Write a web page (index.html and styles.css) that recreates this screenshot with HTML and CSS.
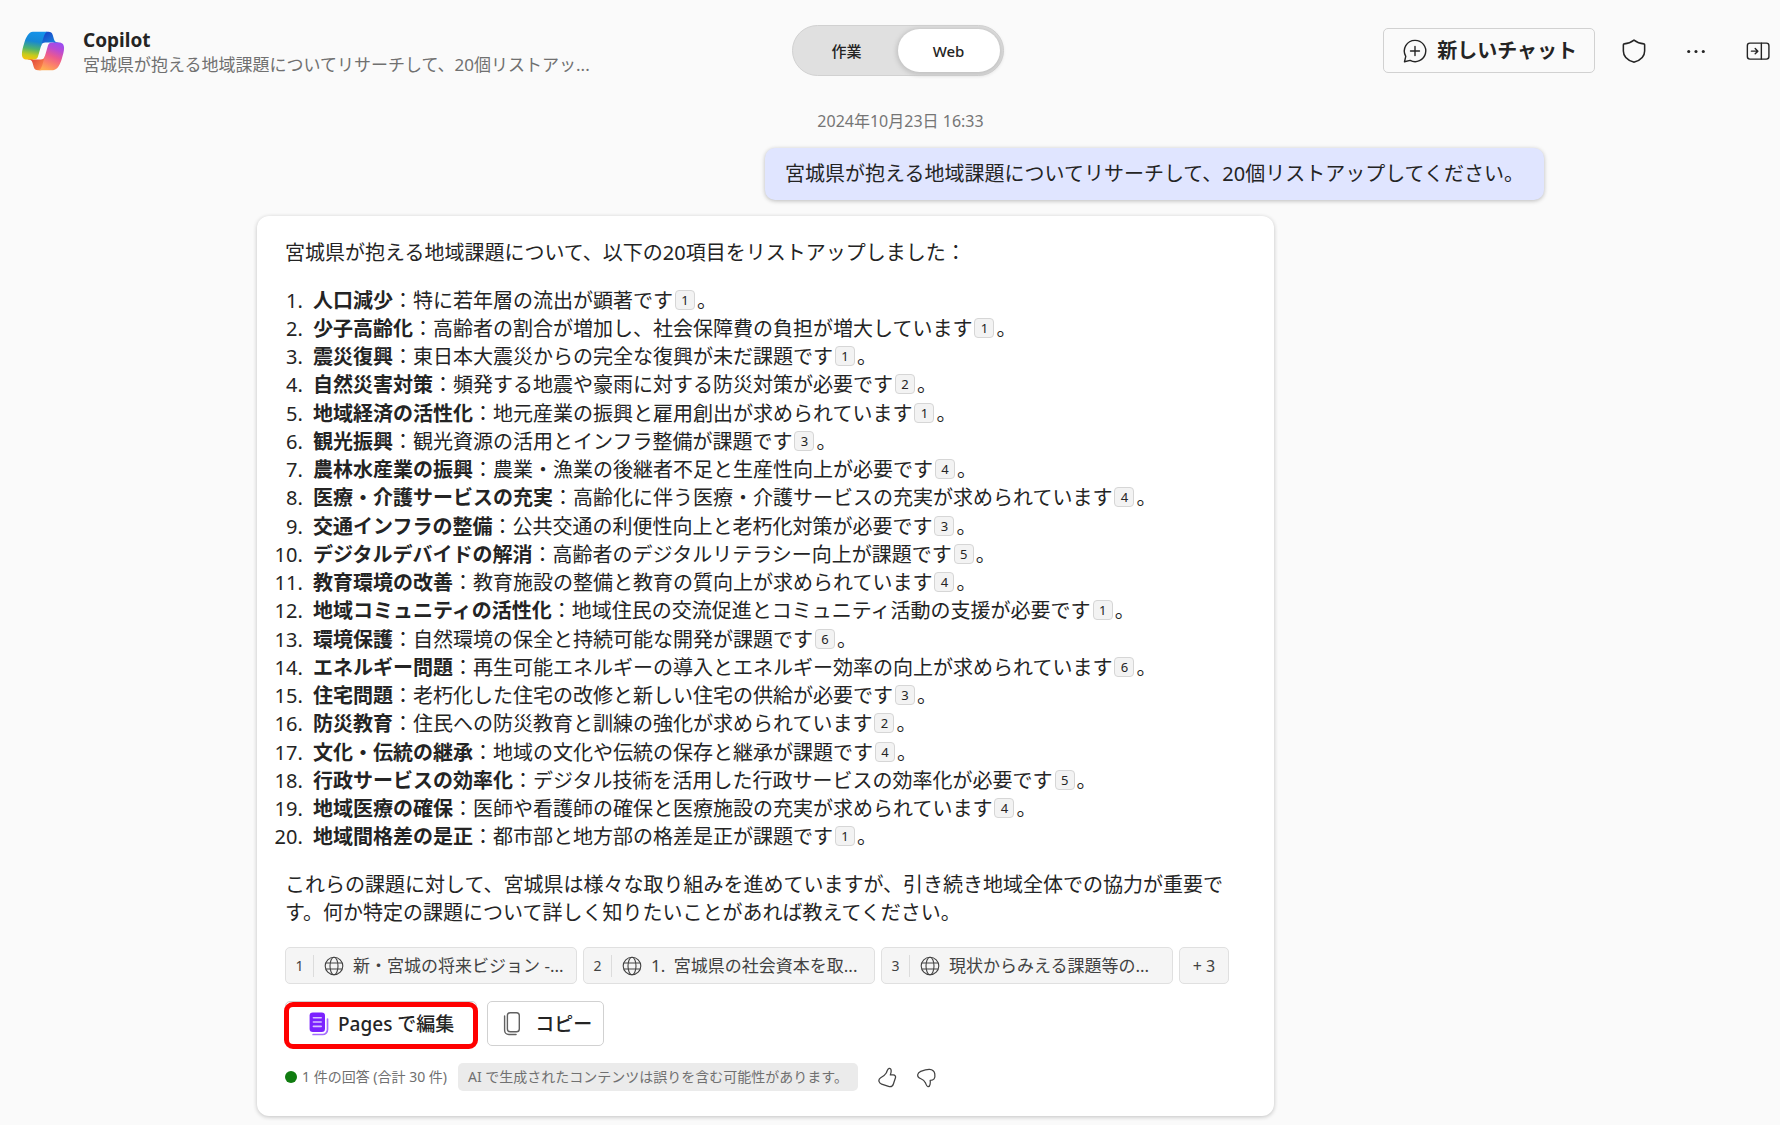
FILE: index.html
```html
<!DOCTYPE html>
<html lang="ja">
<head>
<meta charset="utf-8">
<meta name="viewport" content="width=device-width, initial-scale=1">
<title>Copilot</title>
<link rel="stylesheet" href="styles.css">
</head>
<body>
<svg class="defs" width="0" height="0" aria-hidden="true">
  <symbol id="globe" viewBox="0 0 20 20"><g fill="none" stroke="currentColor" stroke-width="1.1"><circle cx="10" cy="10" r="8.8"/><ellipse cx="10" cy="10" rx="4" ry="8.8"/><path d="M2 7h16M2 13h16"/></g></symbol>
</svg>
<header class="topbar">
  <div class="brand">
    <svg class="logo" viewBox="0 0 48 48" aria-hidden="true">
      <defs>
        <linearGradient id="ga" x1="0.9" y1="0.8" x2="0.3" y2="0"><stop offset="0" stop-color="#1b8fe0"/><stop offset="1" stop-color="#1746c9"/></linearGradient>
        <linearGradient id="gb" x1="0" y1="0.3" x2="0.8" y2="1"><stop offset="0" stop-color="#d83a3a"/><stop offset="1" stop-color="#ff8a4a"/></linearGradient>
        <linearGradient id="gc" x1="0.55" y1="0" x2="0.4" y2="1"><stop offset="0" stop-color="#1593ea"/><stop offset="0.35" stop-color="#1687d4"/><stop offset="0.62" stop-color="#4fb36c"/><stop offset="0.85" stop-color="#c6cb1c"/><stop offset="1" stop-color="#f3c40f"/></linearGradient>
        <linearGradient id="gd" x1="0.75" y1="0" x2="0.35" y2="1"><stop offset="0" stop-color="#9a4df0"/><stop offset="0.25" stop-color="#bd4bd0"/><stop offset="0.5" stop-color="#ec5a8e"/><stop offset="0.75" stop-color="#fb7f6c"/><stop offset="1" stop-color="#ffac52"/></linearGradient>
      </defs>
      <path fill="url(#ga)" d="M34.142 7.325A4.63 4.63 0 0 0 29.7 4H28.35a4.63 4.63 0 0 0-4.554 3.794L21.48 20.407l.575-1.965a4.63 4.63 0 0 1 4.444-3.33h7.853l3.294 1.282 3.175-1.283h-.926a4.63 4.63 0 0 1-4.443-3.325l-1.31-4.461Z"/>
      <path fill="url(#gb)" d="M14.33 40.656A4.63 4.63 0 0 0 18.779 44h2.87a4.63 4.63 0 0 0 4.629-4.51l.312-12.163-.654 2.233a4.63 4.63 0 0 1-4.443 3.329h-7.919l-2.823-1.531-3.057 1.53h.912a4.63 4.63 0 0 1 4.447 3.344l1.279 4.424Z"/>
      <path fill="url(#gc)" d="M29.5 4H13.46c-4.583 0-7.332 6.057-9.165 12.113-2.172 7.177-5.014 16.775 3.208 16.775h6.926a4.637 4.637 0 0 0 4.455-3.357 2078.617 2078.617 0 0 1 4.971-17.156c.842-2.846 1.543-5.29 2.62-6.811C27.08 4.71 28.086 4 29.502 4Z"/>
      <path fill="url(#gd)" d="M18.498 44h16.04c4.582 0 7.332-6.058 9.165-12.115 2.171-7.177 5.013-16.775-3.208-16.775h-6.926a4.638 4.638 0 0 0-4.456 3.358 2084.036 2084.036 0 0 1-4.972 17.16c-.842 2.847-1.542 5.29-2.62 6.812-.604.85-1.61 1.56-3.023 1.56Z"/>
    </svg>
    <div class="brand-text">
      <h1>Copilot</h1>
      <p>宮城県が抱える地域課題についてリサーチして、20個リストアッ...</p>
    </div>
  </div>
  <div class="toggle" role="group" aria-label="モード">
    <button type="button" class="toggle-item">作業</button>
    <button type="button" class="toggle-item active" aria-pressed="true">Web</button>
  </div>
  <div class="actions">
    <button type="button" class="btn new-chat">
      <svg class="icon" viewBox="0 0 20 20" fill="none" stroke="currentColor" stroke-width="1" stroke-linecap="round" stroke-linejoin="round" aria-hidden="true"><path d="M10 2.4a7.6 7.6 0 1 1-3.5 14.3l-4 1 .9-3.9A7.6 7.6 0 0 1 10 2.4zM10 6.8v6.4M6.8 10h6.4"/></svg>
      新しいチャット
    </button>
    <button type="button" class="icon-btn" aria-label="保護"><svg class="icon" viewBox="0 0 20 20" fill="none" stroke="currentColor" stroke-width="1.1" stroke-linejoin="round" aria-hidden="true"><path d="M10 2.2c2 1.6 4.300 2.500 7 2.700.4 0 .6.300.6.600v4.500c0 3.700-2.400 6.400-7.300 7.900a1 1 0 0 1-.6 0C4.800 16.400 2.400 13.700 2.400 10V5.500c0-.3.2-.6.600-.6 2.700-.2 5-1.100 7-2.700z"/></svg></button>
    <button type="button" class="icon-btn" aria-label="その他"><svg class="icon" viewBox="0 0 20 20" fill="currentColor" aria-hidden="true"><circle cx="4.800" cy="10.300" r="1.100"/><circle cx="10" cy="10.300" r="1.100"/><circle cx="15.200" cy="10.300" r="1.100"/></svg></button>
    <button type="button" class="icon-btn" aria-label="パネル"><svg class="icon" viewBox="0 0 20 20" fill="none" stroke="currentColor" stroke-width="1" stroke-linecap="round" stroke-linejoin="round" aria-hidden="true"><rect x="2.400" y="4.400" width="15.400" height="11.400" rx="1.800"/><path d="M12.400 4.400v11.400M5.300 10.100h4.500M8 8.200l1.900 1.900L8 12"/></svg></button>
  </div>
</header>
<main class="chat">
  <p class="date">2024年10月23日 16:33</p>
  <p class="question">宮城県が抱える地域課題についてリサーチして、20個リストアップしてください。</p>
  <article class="answer">
    <p>宮城県が抱える地域課題について、以下の20項目をリストアップしました：</p>
    <ol class="issues">
      <li><b>人口減少</b>：特に若年層の流出が顕著です<span class="cite">1</span>。</li>
      <li><b>少子高齢化</b>：高齢者の割合が増加し、社会保障費の負担が増大しています<span class="cite">1</span>。</li>
      <li><b>震災復興</b>：東日本大震災からの完全な復興が未だ課題です<span class="cite">1</span>。</li>
      <li><b>自然災害対策</b>：頻発する地震や豪雨に対する防災対策が必要です<span class="cite">2</span>。</li>
      <li><b>地域経済の活性化</b>：地元産業の振興と雇用創出が求められています<span class="cite">1</span>。</li>
      <li><b>観光振興</b>：観光資源の活用とインフラ整備が課題です<span class="cite">3</span>。</li>
      <li><b>農林水産業の振興</b>：農業・漁業の後継者不足と生産性向上が必要です<span class="cite">4</span>。</li>
      <li><b>医療・介護サービスの充実</b>：高齢化に伴う医療・介護サービスの充実が求められています<span class="cite">4</span>。</li>
      <li><b>交通インフラの整備</b>：公共交通の利便性向上と老朽化対策が必要です<span class="cite">3</span>。</li>
      <li><b>デジタルデバイドの解消</b>：高齢者のデジタルリテラシー向上が課題です<span class="cite">5</span>。</li>
      <li><b>教育環境の改善</b>：教育施設の整備と教育の質向上が求められています<span class="cite">4</span>。</li>
      <li><b>地域コミュニティの活性化</b>：地域住民の交流促進とコミュニティ活動の支援が必要です<span class="cite">1</span>。</li>
      <li><b>環境保護</b>：自然環境の保全と持続可能な開発が課題です<span class="cite">6</span>。</li>
      <li><b>エネルギー問題</b>：再生可能エネルギーの導入とエネルギー効率の向上が求められています<span class="cite">6</span>。</li>
      <li><b>住宅問題</b>：老朽化した住宅の改修と新しい住宅の供給が必要です<span class="cite">3</span>。</li>
      <li><b>防災教育</b>：住民への防災教育と訓練の強化が求められています<span class="cite">2</span>。</li>
      <li><b>文化・伝統の継承</b>：地域の文化や伝統の保存と継承が課題です<span class="cite">4</span>。</li>
      <li><b>行政サービスの効率化</b>：デジタル技術を活用した行政サービスの効率化が必要です<span class="cite">5</span>。</li>
      <li><b>地域医療の確保</b>：医師や看護師の確保と医療施設の充実が求められています<span class="cite">4</span>。</li>
      <li><b>地域間格差の是正</b>：都市部と地方部の格差是正が課題です<span class="cite">1</span>。</li>
    </ol>
    <p>これらの課題に対して、宮城県は様々な取り組みを進めていますが、引き続き地域全体での協力が重要です。何か特定の課題について詳しく知りたいことがあれば教えてください。</p>
    <div class="sources">
      <a class="source" href="#"><span class="source-no">1</span><svg class="source-icon" aria-hidden="true"><use href="#globe"/></svg><span class="source-title">新・宮城の将来ビジョン -...</span></a>
      <a class="source" href="#"><span class="source-no">2</span><svg class="source-icon" aria-hidden="true"><use href="#globe"/></svg><span class="source-title">1.&ensp;宮城県の社会資本を取...</span></a>
      <a class="source" href="#"><span class="source-no">3</span><svg class="source-icon" aria-hidden="true"><use href="#globe"/></svg><span class="source-title">現状からみえる課題等の...</span></a>
      <button type="button" class="more">+ 3</button>
    </div>
    <div class="tools">
      <button type="button" class="btn pages">
        <svg class="icon" viewBox="0 0 20 20" fill="none" aria-hidden="true"><path d="M16.800 6.500v7.500a3.500 3.500 0 0 1-3.500 3.500H6.500" stroke="#a46bff" stroke-width="1.200" stroke-linecap="round"/><rect x="4" y="1.700" width="11" height="14" rx="2.300" fill="#7b22ff"/><path d="M6.700 5.500h5.600M6.700 8.600h5.600M6.700 11.700h5.600" stroke="#d9c2ff" stroke-width="1.100" stroke-linecap="round"/></svg>
        Pages で編集
      </button>
      <button type="button" class="btn copy">
        <svg class="icon" viewBox="0 0 20 20" fill="none" stroke="#616161" stroke-width="1" stroke-linecap="round" aria-hidden="true"><rect x="6" y="2" width="8.500" height="13.500" rx="2"/><path d="M4 4.300v10.200a3 3 0 0 0 3 3h5.200"/></svg>
        コピー
      </button>
    </div>
    <footer class="meta">
      <span class="count">1 件の回答 (合計 30 件)</span>
      <span class="notice">AI で生成されたコンテンツは誤りを含む可能性があります。</span>
      <button type="button" class="vote" aria-label="良い"><svg viewBox="0 0 20 20" fill="none" stroke="currentColor" stroke-width="1.200" stroke-linejoin="round" aria-hidden="true"><path d="M11.500 1.300C9.800 1.700 9.800 4 8.800 5.700 7.700 7.600 6 8.900 3.500 10.300c-1.500.9-2 2.200-1.500 3.600.4 1.300 1.100 2 2.400 2.400l6.600 2.200c2.200.7 3.900-.2 4.600-2.300l1.900-5.700c.6-1.700-.3-3-2.100-3h-2.700c.5-1.300.8-2.500.8-3.600 0-1.700-.8-2.800-2-2.600z"/></svg></button>
      <button type="button" class="vote" aria-label="悪い"><svg viewBox="0 0 20 20" fill="none" stroke="currentColor" stroke-width="1.200" stroke-linejoin="round" aria-hidden="true"><path d="M11.300 18.700c-1.400-.2-1.600-2.200-2.400-3.800-.8-1.700-1.900-2.800-4.200-3.700-2.300-.8-3.300-2-3.100-3.800.2-1.600 1.200-2.600 2.900-3.300 2.600-1 5.600-2 8.300-1.900 2.900.2 4.700 1.800 5.100 4.300.3 1.900.2 3.600-.7 4.800-.8 1-2 1.400-3.700 1.500.2 1.200.2 2.500-.1 3.700-.3 1.500-1 2.400-2.100 2.200z"/></svg></button>
    </footer>
  </article>
</main>
</body>
</html>
```
FILE: styles.css
```css
* { box-sizing: border-box; }

body {
  margin: 0;
  background: #fafafa;
  color: #242424;
  font-family: "Noto Sans", "Noto Sans CJK JP", sans-serif;
  font-size: 20px;
  line-height: 28px;
}

h1, p, ol { margin: 0; padding: 0; }
button { font: inherit; color: inherit; cursor: pointer; }
svg { display: block; flex: none; }
.defs { position: absolute; }
.icon { width: 28px; height: 28px; }

/* Top bar */
.topbar {
  display: grid;
  grid-template-columns: 1fr auto 1fr;
  align-items: center;
  height: 101px;
  padding: 0 8px 0 20px;
}
.brand { display: flex; align-items: center; gap: 17px; }
.logo { width: 46px; height: 46px; }
.brand-text { padding-top: 2px; }
.brand h1 { font-size: 19px; line-height: 26px; font-weight: 700; }
.brand p { font-size: 17px; line-height: 24px; color: #707070; white-space: nowrap; }

.toggle {
  display: flex;
  width: 212px;
  height: 51px;
  margin-left: 3px;
  padding: 3px;
  border: 1px solid #d1d1d1;
  border-radius: 26px;
  background: #e0e0e0;
}
.toggle-item {
  flex: 1;
  padding: 0;
  border: 0;
  border-radius: 22px;
  background: none;
  font-size: 15px;
  font-weight: 500;
}
.toggle-item.active { background: #fff; box-shadow: 0 1px 4px 2px #c4c4c4; }

.actions { display: flex; justify-content: flex-end; align-items: center; gap: 34px; }
.btn {
  display: flex;
  align-items: center;
  gap: 8px;
  height: 45px;
  padding: 0 17px;
  border: 1px solid #d1d1d1;
  border-radius: 5px;
  background: #fff;
  font-weight: 500;
  white-space: nowrap;
}
.new-chat { margin-right: -9px; background: #fafafa; font-weight: 700; }
.icon-btn { padding: 0; border: 0; background: none; }

/* Conversation */
.chat {
  display: flex;
  flex-direction: column;
  max-width: 1308px;
  margin: 0 auto;
  padding: 8px 0 9px 21px;
}
.date { text-align: center; font-size: 16px; line-height: 24px; color: #757575; }
.question {
  align-self: flex-end;
  margin-top: 15px;
  padding: 12px 20px;
  border-radius: 10px;
  background: #e0e5ff;
  box-shadow: 0 1px 4px #b9b9b9;
}
.answer {
  width: 79%;
  margin-top: 16px;
  padding: 23px 28px 25px;
  border-radius: 12px;
  background: #fff;
  box-shadow: 0 1px 4px #c0c0c0;
}
.issues { margin: 20px 0; padding-left: 23px; }
.issues li { padding-left: 5px; }
.issues li:nth-child(4n) { margin-bottom: 1px; }
.cite {
  display: inline-block;
  width: 20px;
  height: 20px;
  margin: 0 2px;
  border: 1px solid #d6d6d6;
  border-radius: 4px;
  background: #f3f3f3;
  font-size: 13px;
  line-height: 18px;
  text-align: center;
  vertical-align: 3px;
}

.sources { display: flex; gap: 6px; margin-top: 20px; }
.source, .more {
  display: flex;
  align-items: center;
  height: 37px;
  border: 1px solid #e0e0e0;
  border-radius: 5px;
  background: #f5f5f5;
  color: #424242;
  font-size: 17px;
}
.source { flex: 0 1 292px; min-width: 0; text-decoration: none; }
.source-no {
  width: 28px;
  border-right: 1px solid #dcdcdc;
  font-size: 14px;
  line-height: 22px;
  text-align: center;
}
.source-icon { width: 20px; height: 20px; margin: 0 9px 0 10px; }
.source-title { overflow: hidden; white-space: nowrap; text-overflow: ellipsis; }
.more { justify-content: center; width: 50px; padding: 0; font-size: 16px; white-space: nowrap; }

.tools { display: flex; gap: 10px; margin-top: 17px; font-size: 19px; }
.pages { position: relative; padding: 0 22px 0 18px; gap: 6px; }
.pages::after {
  content: "";
  position: absolute;
  inset: 0 -2px -4px;
  border: 5px solid #f00;
  border-radius: 9px;
}
.copy { padding: 0 11px; }

.meta {
  display: flex;
  align-items: center;
  margin-top: 17px;
  color: #707070;
  font-size: 14px;
  white-space: nowrap;
}
.count { display: flex; align-items: center; gap: 5px; }
.count::before { content: ""; width: 12px; height: 12px; border-radius: 50%; background: #107c10; }
.notice { margin: 0 10px 0 11px; padding: 0 10px; border-radius: 5px; background: #ebebeb; }
.vote { padding: 0 9px; border: 0; background: none; color: #424242; }
.vote svg { width: 21px; height: 21px; }
```
